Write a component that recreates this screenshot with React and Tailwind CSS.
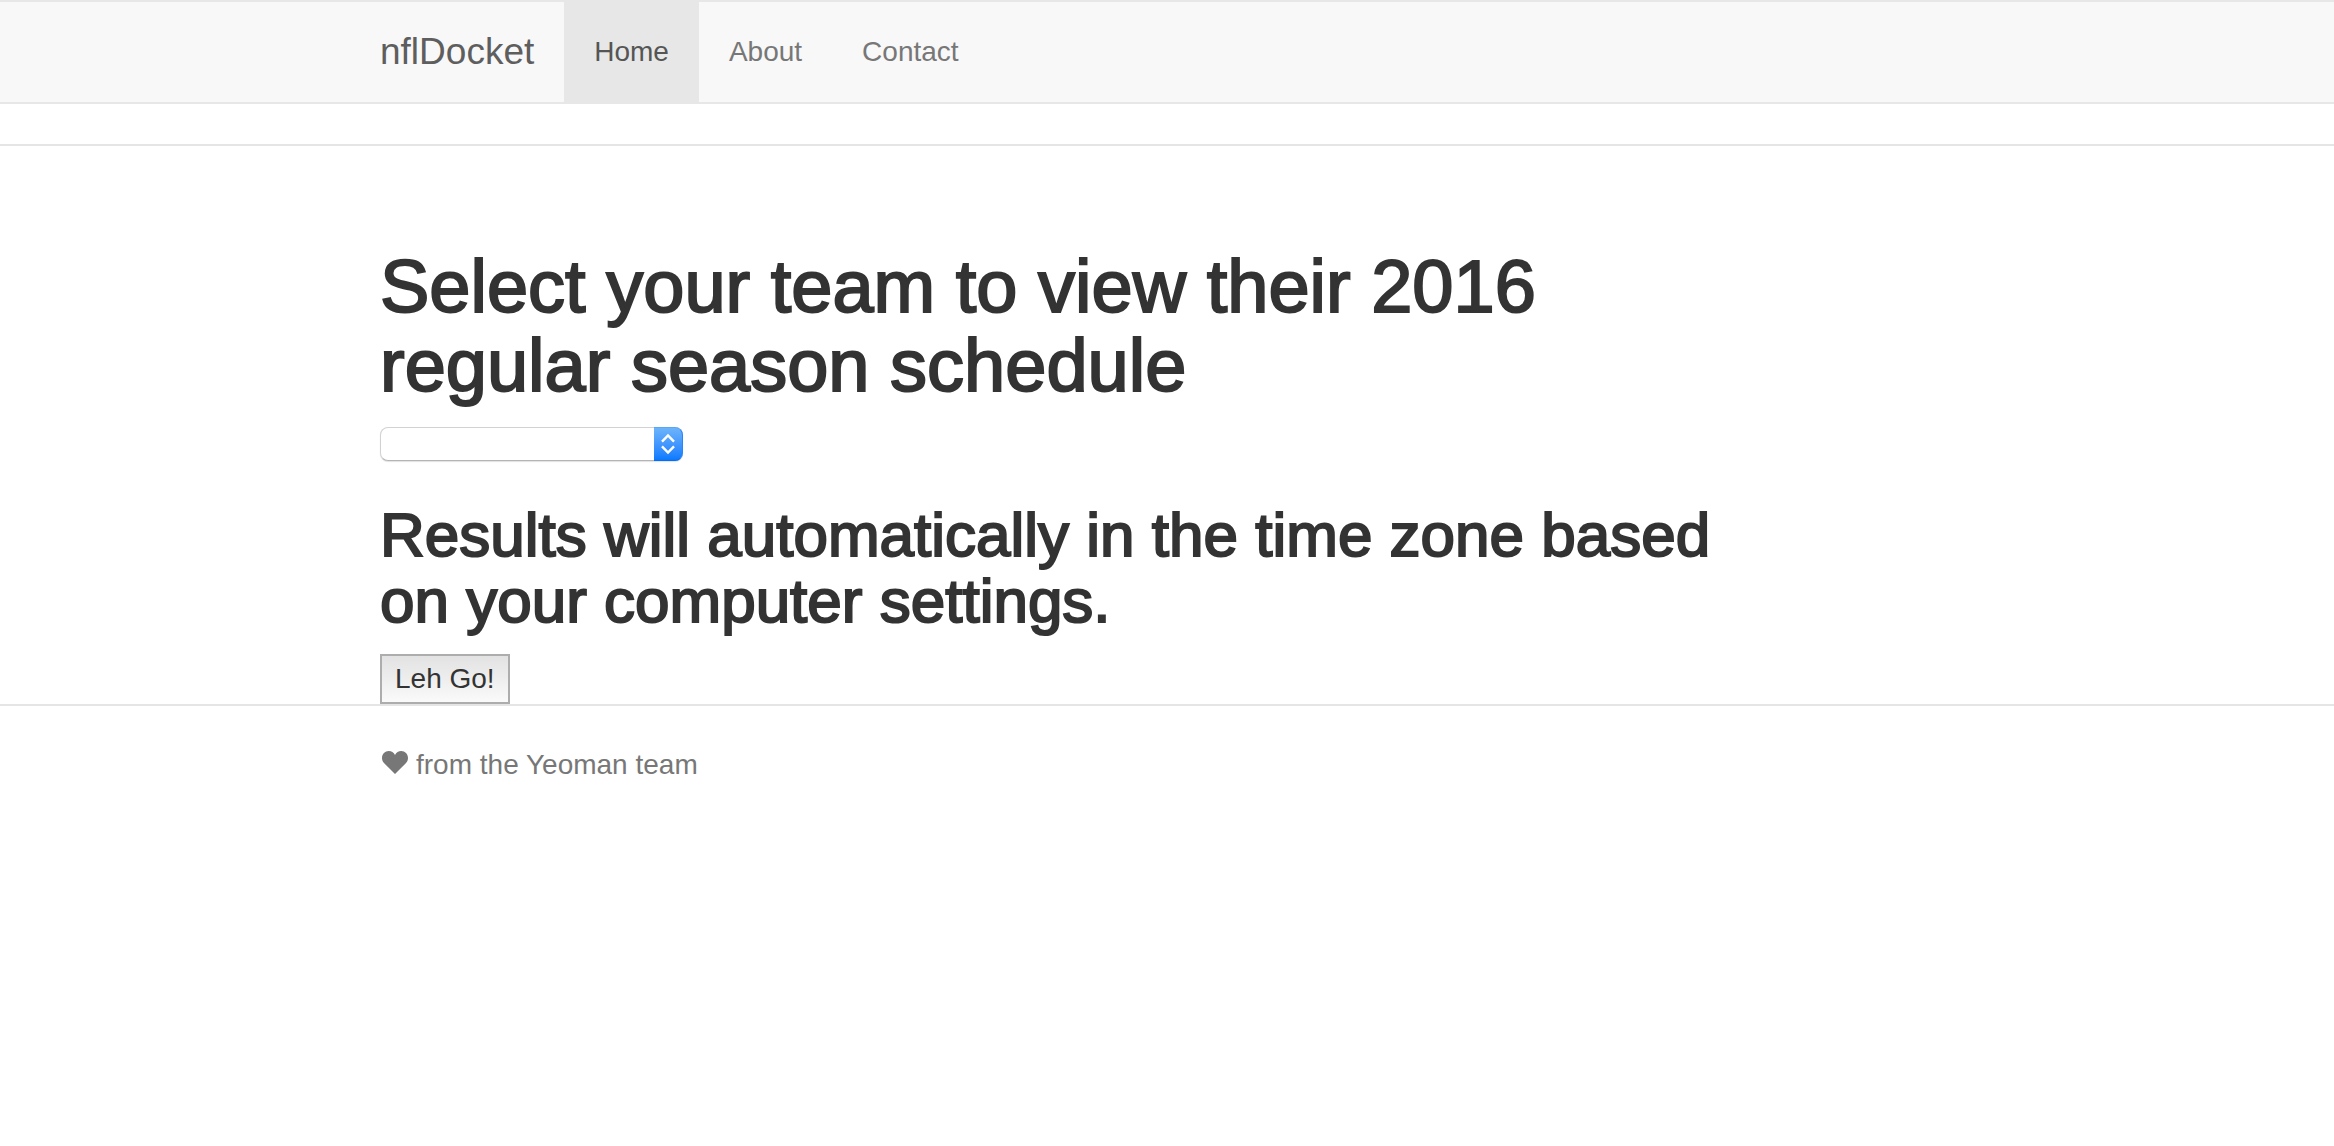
import { useState } from "react";

const links = ["Home", "About", "Contact"];

const teams = [
  "Arizona Cardinals",
  "Chicago Bears",
  "Dallas Cowboys",
  "Denver Broncos",
  "Green Bay Packers",
  "Seattle Seahawks",
];

function Container({ children, className = "" }) {
  return <div className={`mx-auto w-full max-w-[1574px] ${className}`}>{children}</div>;
}

function Navbar() {
  return (
    <nav className="mb-10 border-y-2 border-[#e7e7e7] bg-[#f8f8f8]">
      <Container className="flex">
        <a href="#/" className="py-[30px] pr-[30px] text-[37px] leading-10 text-[#5e5e5e]">
          nflDocket
        </a>
        <ul className="flex">
          {links.map((name, i) => (
            <li key={name}>
              <a
                href={`#/${name.toLowerCase()}`}
                aria-current={i === 0 ? "page" : undefined}
                className="block px-[30px] py-[30px] leading-10 text-[#777] aria-[current=page]:bg-[#e7e7e7] aria-[current=page]:text-[#555]"
              >
                {name}
              </a>
            </li>
          ))}
        </ul>
      </Container>
    </nav>
  );
}

function TeamSelect() {
  const [team, setTeam] = useState("");
  return (
    <div className="relative mt-[22px] flex h-[34px] w-[303px]">
      <select
        aria-label="Team"
        value={team}
        onChange={(e) => setTeam(e.target.value)}
        className="w-full appearance-none rounded-lg border border-[#d2d2d2] border-b-[#b4b4b4] bg-white pr-8 pl-3 text-[22px] leading-7 shadow-[0_1px_1px_rgba(0,0,0,0.12)]"
      >
        <option value=""></option>
        {teams.map((name) => (
          <option key={name}>{name}</option>
        ))}
      </select>
      <span className="pointer-events-none absolute inset-y-0 right-0 flex w-[29px] items-center justify-center rounded-r-lg border border-l-0 border-t-[#5aa5f5] border-r-[#2a85f8] border-b-[#0a6cf5] bg-linear-to-b from-[#6cb3fa] to-[#067aff]">
        <svg viewBox="0 0 14 22" className="h-[22px] w-[14px]" fill="none" stroke="#fff" strokeWidth="2.4" aria-hidden="true">
          <path d="M1 8.6 7 2.4l6 6.2M1 13.4l6 6.2 6-6.2" />
        </svg>
      </span>
    </div>
  );
}

export default function App() {
  return (
    <div className="min-h-screen bg-white font-['Liberation_Sans',Arial,sans-serif] text-[28px] leading-10 text-[#333]">
      <header className="border-b-2 border-[#e5e5e5]">
        <Navbar />
      </header>
      <main>
        <Container className="pt-[101px]">
          <div className="max-w-[1380px]">
            <h1 className="text-[74px] leading-[79px] [-webkit-text-stroke:2px_#333]">
              Select your team to view their 2016 regular season schedule
            </h1>
            <TeamSelect />
            <h2 className="mt-[41px] mb-5 text-[62px] leading-[66px] [-webkit-text-stroke:2px_#333]">
              Results will automatically in the time zone based on your computer settings.
            </h2>
            <button
              type="button"
              className="block border-2 border-[#adadad] bg-linear-to-b from-[#e2e2e2] to-[#fafafa] px-[13px] leading-[46px]"
            >
              Leh Go!
            </button>
          </div>
        </Container>
      </main>
      <footer className="border-t-2 border-[#e5e5e5] pt-[39px] text-[#777]">
        <Container>
          <p className="flex items-center gap-2">
            <svg viewBox="0 0 26 23" className="mb-1.5 ml-0.5 h-[23px] w-[26px]" fill="currentColor" aria-hidden="true">
              <path d="M13 23 2.2 12.2C.6 10.6 0 9 0 7.1 0 3 3 0 6.8 0 9.4 0 11.8 1.4 13 4 14.2 1.4 16.6 0 19.2 0 23 0 26 3 26 7.1c0 1.9-.6 3.5-2.2 5.100z" />
            </svg>
            from the Yeoman team
          </p>
        </Container>
      </footer>
    </div>
  );
}
